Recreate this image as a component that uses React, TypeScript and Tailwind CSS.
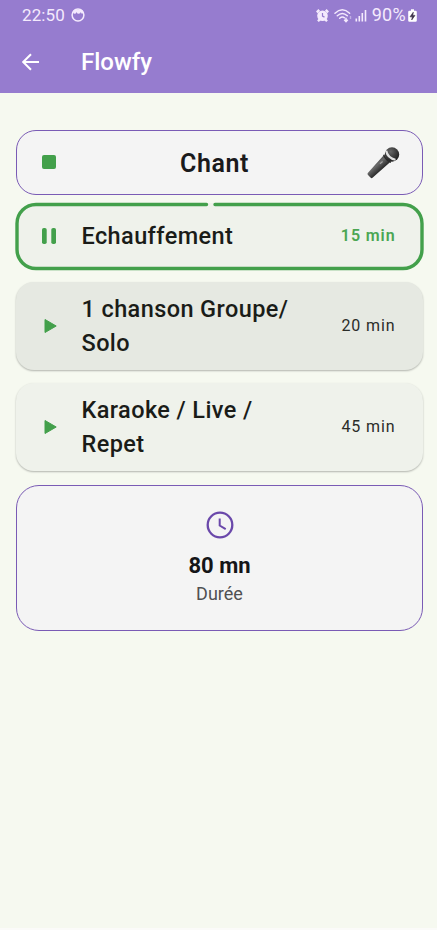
import type { ReactNode } from 'react';

const GREEN = '#43a04b';

function StatusBar() {
  return (
    <div className="flex h-[30px] items-center justify-between pl-[22px] pr-[20px] text-[#f4eafd]">
      <div className="flex items-center gap-[6px]">
        <span className="text-[17px] leading-none tracking-[0.1px]">22:50</span>
        <svg width="14" height="14" viewBox="0 0 14 14" fill="none">
          <circle cx="7" cy="7" r="5.9" stroke="currentColor" strokeWidth="1.5" />
          <path d="M3 1.800h8l1.500 2.500q-.8 1.800-2 1.200l-.7-1.500-.6 1.300q-1.800.8-3.200 0l-.5-1.200-.8 1.400q-1.700.8-2.600-.8z" fill="currentColor" />
        </svg>
      </div>
      <div className="flex items-center">
        <svg width="13" height="13" viewBox="0 0 13 13" fill="none" className="mr-[5px]">
          <circle cx="6.5" cy="6.8" r="5.3" fill="currentColor" />
          <path d="M.8 3.3 3.2.9M12.2 3.3 9.8.9M2 12.200l1.700-1.800M11 12.200 9.3 10.400" stroke="currentColor" strokeWidth="2.400" />
          <path d="M6.5 4v3.1l2 1" stroke="#967ccf" strokeWidth="1.2" />
        </svg>
        <svg width="19" height="15" viewBox="0 0 19 15" fill="none" stroke="currentColor" strokeWidth="1.5" className="mr-[2px]">
          <path d="M1 5.2Q8.3-1.6 15.6 5.2M3.3 7.8Q8.3 3.2 13.3 7.8M5.7 10.2Q8.3 8 10.5 9.8" strokeLinecap="round" />
          <path d="M12 9.7v3.8M10.2 11.800l1.800 1.800 1.800-1.800" />
          <path d="M16.5 8v3" strokeWidth="1.400" opacity=".45" />
        </svg>
        <svg width="13" height="13" viewBox="0 0 13 13" fill="currentColor" className="mr-[4px]">
          <rect x="0.500" y="9.500" width="1.600" height="3" />
          <rect x="3.500" y="7" width="1.600" height="5.500" />
          <rect x="6.500" y="4" width="1.600" height="8.500" />
          <rect x="9.700" y="1" width="1.600" height="11.500" />
        </svg>
        <span className="text-[18px] leading-none tracking-[0.300px]">90%</span>
        <svg width="9" height="13" viewBox="0 0 9 13" className="ml-[2px]">
          <path d="M3 .3h3v1.4h1.6q1.2 0 1.2 1.2v8.6q0 1.2-1.2 1.2H1.4Q.2 12.700.2 11.500V2.900Q.2 1.700 1.400 1.700H3z" fill="#fff" />
          <path d="M5.300 3.200 2 7.800h2.300L3.700 11 7 6.400H4.800z" fill="#3b3148" stroke="#3b3148" strokeWidth=".6" />
        </svg>
      </div>
    </div>
  );
}

function Mic() {
  return (
    <svg width="34" height="34" viewBox="0 0 34 34">
      <defs>
        <linearGradient id="handle" x1="8" y1="15" x2="16" y2="24" gradientUnits="userSpaceOnUse">
          <stop offset="0" stopColor="#3a3a3a" />
          <stop offset=".4" stopColor="#6b6b6b" />
          <stop offset="1" stopColor="#252525" />
        </linearGradient>
        <radialGradient id="head" cx=".4" cy=".3" r=".8">
          <stop offset="0" stopColor="#666" />
          <stop offset=".55" stopColor="#383838" />
          <stop offset="1" stopColor="#151515" />
        </radialGradient>
      </defs>
      <path d="M17.500 9.500 24 16.200 6.500 31.800Q5.500 32.600 4.500 31.600L2 29Q1 28 1.800 27z" fill="url(#handle)" />
      <circle cx="26" cy="8.500" r="7.200" fill="url(#head)" />
      <path d="M20.200 4.800Q21.500 12 29.500 13.800" fill="none" stroke="#e2e2e2" strokeWidth="2.200" />
      <path d="M17.700 8.800Q19.500 14 25 16.200" fill="none" stroke="#292929" strokeWidth="1.500" />
      <path d="M14 17.800 16.600 15.500" stroke="#a5a5a5" strokeWidth="1.200" />
    </svg>
  );
}

function PlayIcon() {
  return (
    <svg width="14" height="16" viewBox="0 0 14 16" className="-mt-px ml-[2px]">
      <path d="M1 1.500v13L12.200 8z" fill={GREEN} stroke={GREEN} strokeWidth="1" strokeLinejoin="round" />
    </svg>
  );
}

function PauseIcon() {
  return (
    <svg width="14" height="16" viewBox="0 0 14 16" fill={GREEN} className="-mt-px">
      <rect x="0" y="0" width="4.700" height="16" rx="1.800" />
      <rect x="9.300" y="0" width="4.700" height="16" rx="1.800" />
    </svg>
  );
}

function Step({ icon, title, time, className, active = false }: {
  icon: ReactNode;
  title: ReactNode;
  time: string;
  className: string;
  active?: boolean;
}) {
  return (
    <div className={`relative flex items-center pl-[26px] pr-[27.500px] ${className}`}>
      {active && (
        <svg className="absolute -left-px -top-px" width="410" height="69" viewBox="0 0 410 69" fill="none">
          <path
            d="M191.500 2.500H21A19 19 0 0 0 2 21.500V47.500A19 19 0 0 0 21 66.500H388A19 19 0 0 0 407 47.500V21.500A19 19 0 0 0 388 2.500H200"
            stroke={GREEN}
            strokeWidth="3.400"
            strokeLinecap="round"
          />
        </svg>
      )}
      <div className="flex w-[39.500px] shrink-0">{icon}</div>
      <div className="flex-1 whitespace-nowrap text-[23.500px] font-[550] leading-[34.500px] tracking-[0.400px] text-[#1a1c18]">{title}</div>
      <div className={`-mt-px text-[16px] tracking-[0.900px] ${active ? 'font-semibold text-[#4ba653]' : 'text-[#2b2d29]'}`}>{time}</div>
    </div>
  );
}

export default function App() {
  return (
    <div className="flex h-[930px] w-[437px] flex-col overflow-hidden border-b-2 border-[#fbfbf9] bg-[#f6f9f0] font-['Roboto','Liberation_Sans',sans-serif]">
      <header className="h-[93px] shrink-0 bg-[#967ccf] text-white">
        <StatusBar />
        <div className="flex h-[63px] items-center pl-[22px]">
          <svg width="18" height="18" viewBox="0 0 18 18" fill="none" stroke="#fff" strokeWidth="2" className="mr-[41px]">
            <path d="M17 9H1.500M9 1.200 1.200 9 9 16.800" />
          </svg>
          <h1 className="text-[24px] font-[550] leading-none">Flowfy</h1>
        </div>
      </header>

      <main className="flex flex-col pl-4 pr-[14px] pt-[37px]">
        <section className="flex h-[65px] items-center justify-between rounded-[20px] border-[1.500px] border-[#7a5bb5] bg-[#f4f4f4] pl-[25px] pr-[22px]">
          <div className="-mt-px size-[14px] rounded-[2px] bg-[#43a04b]" />
          <h2 className="pl-[7px] pt-px text-[25px] font-semibold leading-none tracking-[0.600px] text-[#1a1a1c]">Chant</h2>
          <Mic />
        </section>

        <Step active icon={<PauseIcon />} title="Echauffement" time="15 min" className="mt-[8px] h-[67px] rounded-[21px] bg-[#eff2eb]" />
        <Step
          icon={<PlayIcon />}
          title={<>1 chanson Groupe/<br />Solo</>}
          time="20 min"
          className="mt-[12px] h-[88px] rounded-[18px] bg-[#e6e9e2] shadow-[0_1px_2px_rgba(0,0,0,0.28)]"
        />
        <Step
          icon={<PlayIcon />}
          title={<>Karaoke / Live /<br />Repet</>}
          time="45 min"
          className="mt-[13px] h-[88px] rounded-[18px] bg-[#eff2eb] shadow-[0_1px_2px_rgba(0,0,0,0.28)]"
        />

        <section className="mt-[14px] flex h-[146px] flex-col items-center rounded-[23px] border-[1.500px] border-[#7a5bb5] bg-[#f4f4f4] pt-[25px]">
          <svg width="28" height="28" viewBox="0 0 28 28" fill="none" stroke="#6a48aa" strokeWidth="2.300">
            <circle cx="14" cy="14" r="12.300" />
            <path d="M13.700 7.500v7l6 3.600" strokeWidth="2" />
          </svg>
          <div className="mt-[13px] text-[22px] font-bold leading-[28px] text-[#151517]">80 mn</div>
          <div className="text-[18px] leading-[27px] text-[#505052]">Durée</div>
        </section>
      </main>
    </div>
  );
}
